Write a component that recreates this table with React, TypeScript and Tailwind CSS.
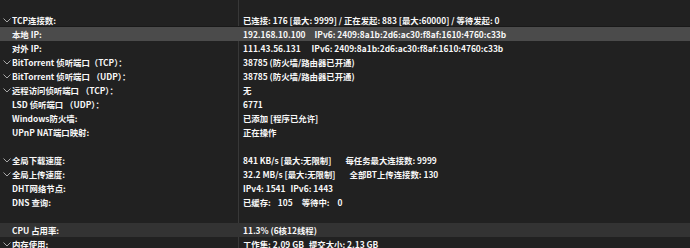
import React from 'react'

type Row = { label: string; value: React.ReactNode; chevron?: boolean; tone?: 'sel' | 'hover' }

const Gap = ({ w }: { w: string }) => <span className={`inline-block ${w}`} />

const rows: (Row | null)[] = [
  { label: 'TCP连接数:', chevron: true, value: '已连接: 176 [最大: 9999] / 正在发起: 883 [最大:60000] / 等待发起: 0' },
  { label: '本地 IP:', tone: 'sel', value: <>192.168.10.100<Gap w="w-[9px]" />IPv6: 2409:8a1b:2d6:ac30:f8af:1610:4760:c33b</> },
  { label: '对外 IP:', value: <>111.43.56.131<Gap w="w-[11px]" />IPv6: 2409:8a1b:2d6:ac30:f8af:1610:4760:c33b</> },
  { label: 'BitTorrent 侦听端口（TCP）：', chevron: true, value: '38785 (防火墙/路由器已开通)' },
  { label: 'BitTorrent 侦听端口 （UDP）：', chevron: true, value: '38785 (防火墙/路由器已开通)' },
  { label: '远程访问侦听端口 （TCP）：', chevron: true, value: '无' },
  { label: 'LSD 侦听端口 （UDP）：', value: '6771' },
  { label: 'Windows防火墙:', value: '已添加 [程序已允许]' },
  { label: 'UPnP NAT端口映射:', value: '正在操作' },
  null,
  { label: '全局下载速度:', chevron: true, value: <>841 KB/s [最大:无限制]<Gap w="w-[14px]" />每任务最大连接数: 9999</> },
  { label: '全局上传速度:', chevron: true, value: <>32.2 MB/s [最大:无限制]<Gap w="w-[14px]" />全部BT上传连接数: 130</> },
  { label: 'DHT网络节点:', value: <>IPv4: 1541<Gap w="w-[5px]" />IPv6: 1443</> },
  { label: 'DNS 查询:', value: <>已缓存:<Gap w="w-[7px]" />105<Gap w="w-[9px]" />等待中:<Gap w="w-[8px]" />0</> },
  null,
  { label: 'CPU 占用率:', tone: 'hover', value: '11.3% (6核12线程)' },
  { label: '内存使用:', chevron: true, value: <>工作集: 2.09 GB<Gap w="w-[5px]" />提交大小: 2.13 GB</> },
]

function Chevron() {
  return (
    <svg width="8" height="5" viewBox="0 0 8 5" className="absolute left-[3px] top-[5px]">
      <path d="M0.5 0.5 L4 4 L7.5 0.5" fill="none" stroke="#a8a8a8" strokeWidth="1" />
    </svg>
  )
}

export default function App() {
  return (
    <div
      className="relative w-[690px] h-[248px] overflow-hidden bg-[#212121] text-[#f8f8f8] text-[8.4px] leading-[14px] font-bold"
      style={{ fontFamily: '"Noto Sans CJK SC", sans-serif' }}
    >
      <div className="absolute left-[238px] top-0 bottom-0 w-px bg-[#383838]" />
      <div className="pt-[13px]">
        {rows.map((r, i) =>
          r === null ? (
            <div key={i} className="h-[14px]" />
          ) : (
            <div
              key={i}
              className={`relative flex h-[14px] items-center whitespace-nowrap ${
                r.tone === 'sel' ? 'bg-[#4b4b4b] shadow-[0_-1px_0_#191919]' : r.tone === 'hover' ? 'bg-[#333333]' : ''
              }`}
            >
              {r.chevron && <Chevron />}
              <div className="w-[243px] shrink-0 pl-[12px]">{r.label}</div>
              <div>{r.value}</div>
            </div>
          )
        )}
      </div>
    </div>
  )
}
